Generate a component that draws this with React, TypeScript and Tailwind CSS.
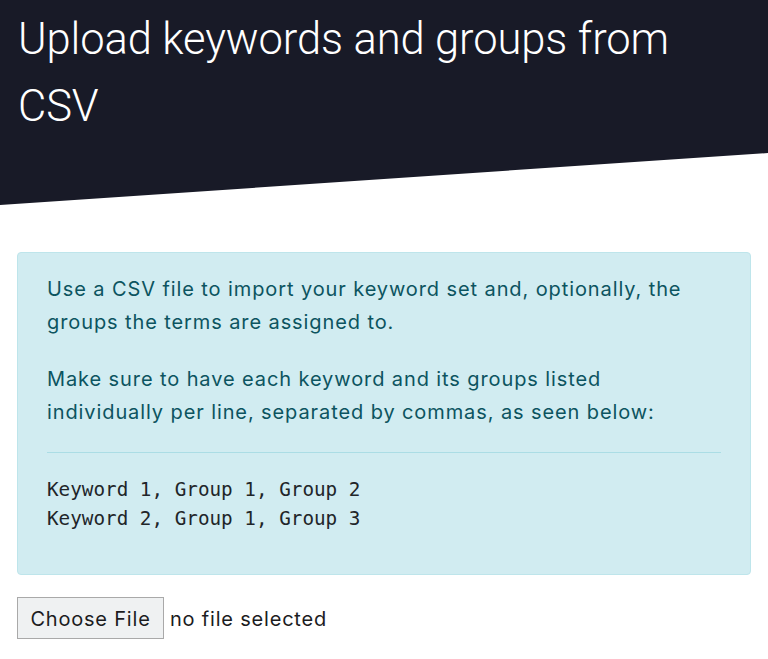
export default function App() {
  return (
    <div className="min-h-[659px] bg-white font-['Inter',sans-serif]">
      <div className="h-[205px] bg-[#181a27] [clip-path:polygon(0_0,100%_0,100%_153px,0_205px)] px-[18px] pt-[6px]">
        <h1 className="w-[690px] font-['Roboto',sans-serif] font-light text-[43.5px] leading-[67px] tracking-[-0.1px] text-white">
          Upload keywords and groups from CSV
        </h1>
      </div>
      <div className="px-[17px] pt-[47px]">
        <div className="rounded-[4px] border border-[#bee5eb] bg-[#d1ecf1] px-[29px] pt-[20px] pb-[41px] text-[#0c5460]">
          <p className="text-[20px] leading-[33px] tracking-[0.9px]">
            Use a CSV file to import your keyword set and, optionally, the groups the terms are assigned to.
          </p>
          <p className="mt-[24px] text-[20px] leading-[33px] tracking-[0.9px]">
            Make sure to have each keyword and its groups listed individually per line, separated by commas, as seen below:
          </p>
          <hr className="mt-[23px] border-0 border-t border-[#abdde5]" />
          <pre className="mt-[22px] font-['DejaVu_Sans_Mono',monospace] text-[19.3px] leading-[29px] text-[#212529]">
{`Keyword 1, Group 1, Group 2
Keyword 2, Group 1, Group 3`}
          </pre>
        </div>
        <div className="mt-[22px] flex items-center">
          <div className="flex h-[42px] w-[147px] items-center justify-center border border-[#a9a9a9] bg-[#eff1f2] pt-[2px] text-[20px] tracking-[0.8px] text-[#1c1c1e]">
            Choose File
          </div>
          <span className="ml-[6px] pt-[2px] text-[20px] tracking-[0.8px] text-[#1c1c1e]">no file selected</span>
        </div>
      </div>
    </div>
  );
}
